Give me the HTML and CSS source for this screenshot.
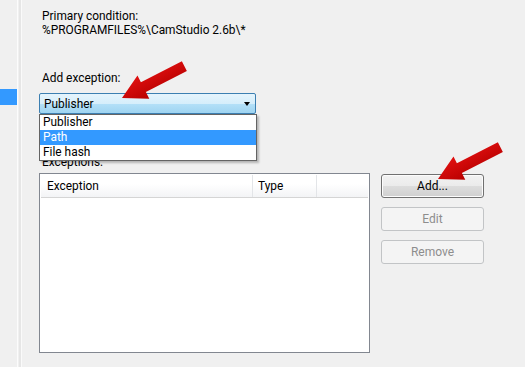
FILE: index.html
```html
<!DOCTYPE html>
<html lang="en">
<head>
    <meta charset="UTF-8">
    <title>Exceptions</title>
    <link rel="stylesheet" href="styles.css">
</head>
<body>
    <div class="window">
        <div class="nav">
            <div class="nav-item"></div>
        </div>
        <div class="divider"></div>

        <div class="content">
            <p class="label">Primary condition:</p>
            <p class="label">%PROGRAMFILES%\CamStudio 2.6b\*</p>

            <p class="label add-label">Add exception:</p>
            <div class="combo-wrap">
                <div class="combo">
                    <span>Publisher</span>
                    <span class="combo-arrow"></span>
                </div>
                <ul class="combo-list">
                    <li>Publisher</li>
                    <li class="selected">Path</li>
                    <li>File hash</li>
                </ul>
            </div>

            <p class="label exc-label">Exceptions:</p>
            <div class="exc-row">
                <div class="listview">
                    <div class="lv-header">
                        <div class="lv-col col-exc">Exception</div>
                        <div class="lv-col col-type">Type</div>
                        <div class="lv-col col-fill"></div>
                    </div>
                </div>
                <div class="buttons">
                    <button class="btn">Add...</button>
                    <button class="btn" disabled>Edit</button>
                    <button class="btn" disabled>Remove</button>
                </div>
            </div>
        </div>

        <!-- Red callout arrows -->
        <svg class="arrows" width="525" height="367" viewBox="0 0 525 367">
            <defs>
                <linearGradient id="red" x1="0" y1="0" x2="0" y2="1">
                    <stop offset="0" stop-color="#e01010"/>
                    <stop offset="1" stop-color="#b80000"/>
                </linearGradient>
            </defs>
            <g transform="translate(122 98) rotate(-27)">
                <polygon points="0,0 24,-13 24,-5.5 70,-5.5 70,5.5 24,5.5 24,13" fill="url(#red)"/>
            </g>
            <g transform="translate(438 179) rotate(-27)">
                <polygon points="0,0 24,-13 24,-5.5 70,-5.5 70,5.5 24,5.5 24,13" fill="url(#red)"/>
            </g>
        </svg>
    </div>
</body>
</html>
```

FILE: styles.css
```css
* {
    margin: 0;
    padding: 0;
    box-sizing: border-box;
}

body {
    background: #f0f0f0;
    font-family: Roboto, 'Noto Sans', sans-serif;
    font-size: 11.9px;
    color: #000;
}

.window {
    position: relative;
    width: 525px;
    height: 367px;
    display: flex;
    overflow: hidden;
}

/* Left navigation pane */
.nav {
    width: 18px;
    border-right: 1px solid #fcfcfc;
    padding-top: 89px;
}

.nav-item {
    height: 16px;
    background: #3399ff;
}

.divider {
    width: 4px;
    border-right: 1px solid #fafafa;
    box-shadow: inset -2px 0 0 #e6e6e6;
}

/* Main content */
.content {
    padding: 9px 0 0 17px;
    flex: 1;
}

.label {
    line-height: 14px;
    padding-left: 3px;
}

.add-label {
    margin-top: 34px;
}

.combo-wrap {
    position: relative;
    width: 217px;
    margin-top: 8px;
}

.combo {
    height: 21px;
    border: 1px solid #3c7fb1;
    border-radius: 2px;
    background: linear-gradient(#e5f4fc 0%, #d6eefb 50%, #b4e0f8 51%, #9fd4f1 100%);
    display: flex;
    align-items: center;
    justify-content: space-between;
    padding: 0 5px 0 4px;
}

.combo-arrow {
    width: 0;
    height: 0;
    border-left: 3.5px solid transparent;
    border-right: 3.5px solid transparent;
    border-top: 4px solid #000;
}

.combo-list {
    position: absolute;
    top: 21px;
    left: 0;
    width: 218px;
    list-style: none;
    background: #fff;
    border: 1px solid #646464;
    box-shadow: 2px 2px 2px rgba(0, 0, 0, 0.25);
    z-index: 2;
}

.combo-list li {
    height: 15px;
    line-height: 15px;
    padding-left: 3px;
}

.combo-list .selected {
    background: #3399ff;
    color: #fff;
}

.exc-label {
    margin-top: 41px;
}

.exc-row {
    display: flex;
    gap: 11px;
    margin-top: 4px;
}

/* List view */
.listview {
    width: 331px;
    height: 180px;
    background: #fff;
    border: 1px solid #828790;
    padding: 1px;
}

.lv-header {
    display: flex;
    height: 23px;
    background: linear-gradient(#ffffff 0%, #ffffff 40%, #f3f4f6 100%);
    border-bottom: 1px solid #d5d5d5;
}

.lv-col {
    line-height: 22px;
    padding-left: 6px;
    border-right: 1px solid #e3e5e8;
}

.col-exc {
    width: 212px;
}

.col-type {
    width: 64px;
    padding-left: 5px;
}

.col-fill {
    flex: 1;
    border-right: none;
}

/* Buttons */
.buttons {
    display: flex;
    flex-direction: column;
    gap: 9px;
    padding-top: 1px;
}

.btn {
    width: 103px;
    height: 24px;
    font-family: inherit;
    font-size: 12px;
    color: #000;
    border: 1px solid #707070;
    border-radius: 3px;
    background: linear-gradient(#f2f2f2 0%, #ebebeb 50%, #dddddd 51%, #cfcfcf 100%);
    box-shadow: inset 0 0 0 1px #fcfcfc;
}

.btn:disabled {
    color: #8d8d8d;
    border-color: #c2c4c6;
    background: #f4f4f4;
    box-shadow: none;
}

/* Overlay arrows */
.arrows {
    position: absolute;
    top: 0;
    left: 0;
    pointer-events: none;
    z-index: 5;
}
```
